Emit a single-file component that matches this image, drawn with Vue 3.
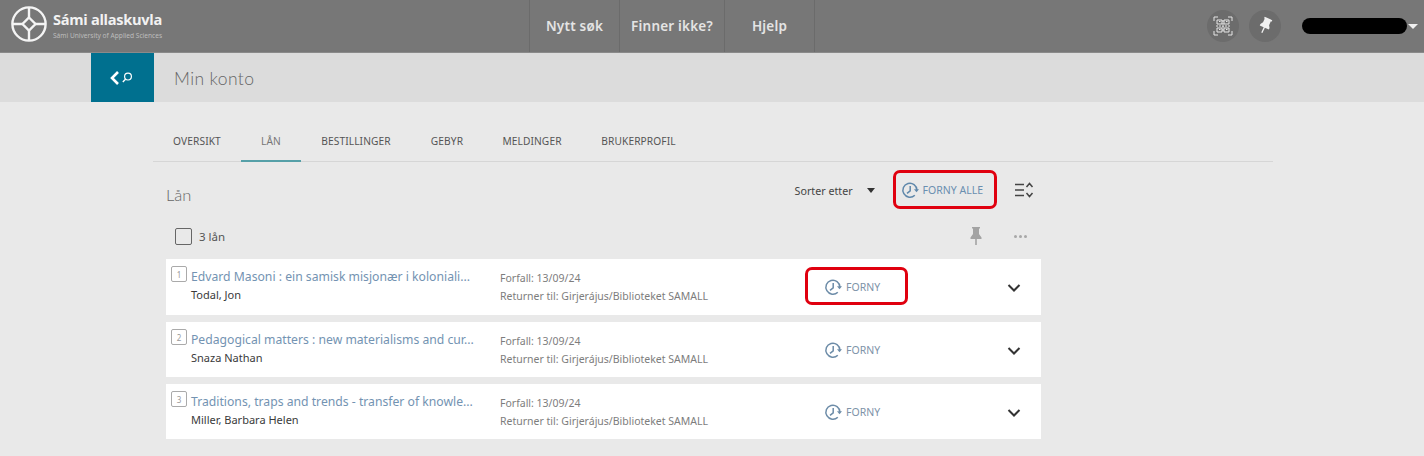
<script setup>
const tabs = [
  { label: 'OVERSIKT', w: 88 },
  { label: 'LÅN', w: 60, active: true },
  { label: 'BESTILLINGER', w: 110 },
  { label: 'GEBYR', w: 72 },
  { label: 'MELDINGER', w: 98 },
  { label: 'BRUKERPROFIL', w: 115 }
]
const loans = [
  { n: 1, title: 'Edvard Masoni : ein samisk misjonær i koloniali...', author: 'Todal, Jon', h: 56, marked: true },
  { n: 2, title: 'Pedagogical matters : new materialisms and cur...', author: 'Snaza Nathan', h: 55 },
  { n: 3, title: 'Traditions, traps and trends - transfer of knowle...', author: 'Miller, Barbara Helen', h: 55 }
]
</script>

<template>
  <div class="page">
    <header class="top">
      <div class="logo">
        <svg width="38" height="38" viewBox="0 0 38 38" fill="none" stroke="#f4f4f4" stroke-width="2.4">
          <circle cx="19" cy="19" r="16.6" />
          <path d="M19 12.5 25.5 19 19 25.5 12.500 19Z" />
          <path d="M19 3v9.500M19 25.500V35M3 19h9.500M25.500 19H35" />
        </svg>
        <div class="logo-text">
          <div class="logo-name">Sámi allaskuvla</div>
          <div class="logo-sub">Sámi University of Applied Sciences</div>
        </div>
      </div>
      <nav class="nav">
        <a class="w1">Nytt søk</a>
        <a class="w2">Finner ikke?</a>
        <a class="w3">Hjelp</a>
      </nav>
      <div class="tools">
        <span class="round">
          <svg width="20" height="20" viewBox="0 0 20 20" fill="none" stroke="#e6e6e6" stroke-width="1">
            <path d="M1 5V1h4M15 1h4v4M19 15v4h-4M5 19H1v-4" />
            <path d="M4 4h5v4H4zM11 4h5v4h-5zM4 12h5v4H4zM11 12h5v4h-5z" />
            <path d="M3 10h14M6 5.500h1.500M13 5.500h1.500M6 13.500h1.500M13 13.500h1.500M10 4v12" stroke-width="1" stroke-dasharray="2 1" />
          </svg>
        </span>
        <span class="round pin">
          <svg width="20" height="20" viewBox="0 0 24 24" fill="#f0f0f0">
            <path d="M16 9V4h1V2H7v2h1v5l-2 3v2h5.200v7h1.600v-7H18v-2z" transform="rotate(25 12 12)" />
          </svg>
        </span>
        <span class="redact"></span>
        <span class="caret-white"></span>
      </div>
    </header>

    <div class="sub">
      <div class="back">
        <svg width="30" height="20" viewBox="0 0 30 20" fill="none" stroke="#fff">
          <path d="M10 4 4 10l6 6" stroke-width="2.600" />
          <circle cx="20" cy="8.600" r="3.400" stroke-width="1.200" />
          <path d="M17.500 11.200 14.800 14" stroke-width="1.400" />
        </svg>
      </div>
      <h1>Min konto</h1>
    </div>

    <main class="main">
      <div class="tabs">
        <a v-for="t in tabs" :key="t.label" class="tab" :class="{ active: t.active }" :style="{ width: t.w + 'px' }">{{ t.label }}</a>
      </div>

      <section class="content">
        <div class="head">
          <h2>Lån</h2>
          <div class="head-actions">
            <span class="sort">Sorter etter</span>
            <span class="caret-dark"></span>
            <a class="renew all marked">
              <svg class="clock" width="18" height="18" viewBox="0 0 18 18" fill="none" stroke="#5f88ab" stroke-width="1.500">
                <path d="M13.800 14.200A7 7 0 1 1 15.900 9" />
                <path d="M9.200 5v4.800L6 12.400" />
                <path d="M13 8.200h5l-2.500 3z" fill="#5f88ab" stroke="none" />
              </svg>
              FORNY ALLE
            </a>
            <svg class="list-sort" width="20" height="18" viewBox="0 0 20 18" fill="none" stroke="#444" stroke-width="1.500">
              <path d="M1 3.500h9M1 9h9M1 14.500h9M12.500 6l3-3.500 3 3.500M12.500 12l3 3.500 3-3.500" />
            </svg>
          </div>
        </div>

        <div class="select-row">
          <span class="check"></span>
          <span class="count">3 lån</span>
          <span class="spacer"></span>
          <svg width="14" height="20" viewBox="0 0 14 20" fill="#a3a3a3">
            <path d="M3 1h8v1.500h-1V8l2.500 3.500V13H7.800v6H6.200v-6H1.500v-1.500L4 8V2.500H3z" />
          </svg>
          <span class="dots"><i></i><i></i><i></i></span>
        </div>

        <div class="rows">
          <article v-for="l in loans" :key="l.n" class="row" :style="{ height: l.h + 'px' }">
            <span class="num">{{ l.n }}</span>
            <div class="book">
              <a class="title">{{ l.title }}</a>
              <div class="author">{{ l.author }}</div>
            </div>
            <div class="meta">
              <div>Forfall: 13/09/24</div>
              <div>Returner til: Girjerájus/Biblioteket SAMALL</div>
            </div>
            <a class="renew single" :class="{ marked: l.marked }">
              <svg class="clock" width="18" height="18" viewBox="0 0 18 18" fill="none" stroke="#6d8ca8" stroke-width="1.500">
                <path d="M13.800 14.200A7 7 0 1 1 15.900 9" />
                <path d="M9.200 5v4.800L6 12.400" />
                <path d="M13 8.200h5l-2.500 3z" fill="#6d8ca8" stroke="none" />
              </svg>
              FORNY
            </a>
            <svg class="chev" width="14" height="10" viewBox="0 0 14 10" fill="none" stroke="#333" stroke-width="2">
              <path d="m1.500 2 5.500 5.500L12.500 2" />
            </svg>
          </article>
        </div>
      </section>
    </main>
  </div>
</template>

<style>
html, body { margin: 0; background: #e9e9e9; }
</style>

<style scoped>
.page {
  width: 1424px;
  height: 456px;
  overflow: hidden;
  background: #e9e9e9;
  font-family: "Noto Sans", "Open Sans", sans-serif;
  color: #444;
}
.top {
  height: 52px;
  background: #777;
  display: flex;
  align-items: center;
  border-bottom: 1px solid #8a8a8a;
  position: relative;
}
.logo { display: flex; align-items: center; gap: 5px; padding-left: 10px; width: 519px; box-sizing: border-box; margin-top: -5px; }
.logo-name { color: #f2f2f2; font-size: 14.600px; font-weight: 700; line-height: 20px; letter-spacing: -0.3px; font-family: "Open Sans", sans-serif; margin-top: 1px; }
.logo-sub { color: #bdbdbd; font-size: 6.600px; line-height: 9px; margin-top: 2px; }
.nav { display: flex; height: 52px; border-left: 1px solid #6b6b6b; margin-left: 10px; }
.nav a {
  display: flex; align-items: center; justify-content: center;
  border-right: 1px solid #6b6b6b;
  color: #e4e4e4; font-size: 13.500px; font-weight: 600; letter-spacing: .2px;
  box-sizing: border-box;
}
.nav .w1 { width: 90px; }
.nav .w2 { width: 105px; }
.nav .w3 { width: 90px; }
.tools { margin-left: auto; display: flex; align-items: center; height: 52px; padding-right: 6px; }
.round { width: 32px; height: 32px; border-radius: 50%; background: #6c6c6c; display: flex; align-items: center; justify-content: center; }
.pin { margin-left: 10px; }
.redact { width: 105px; height: 16px; background: #000; border-radius: 8px; margin-left: 21px; }
.caret-white { width: 0; height: 0; border: 5px solid transparent; border-top: 5px solid #f0f0f0; border-bottom: 0; margin-left: 1px; }

.sub { height: 49px; background: #dcdcdc; display: flex; align-items: center; padding-left: 91px; }
.back { width: 63px; height: 49px; background: #00708f; display: flex; align-items: center; justify-content: center; }
h1 { font-size: 17.500px; font-weight: 300; color: #666; margin: 2px 0 0 20px; font-family: "Lato", sans-serif; letter-spacing: .4px; }

.main { padding: 20px 151px 0 153px; }
.tabs { display: flex; height: 39px; border-bottom: 1px solid #d6d6d6; }
.tab {
  display: flex; align-items: center; justify-content: center;
  font-size: 10.200px; color: #555; box-sizing: border-box; height: 38px; letter-spacing: .1px;
}
.tab.active { color: #777; border-bottom: 2px solid #56a0a8; height: 40px; }

.content { width: 875px; margin-left: 13px; }
.head { display: flex; align-items: center; justify-content: space-between; height: 56px; margin-top: 1px; }
h2 { font-size: 16.500px; font-weight: 300; color: #666; margin: 8px 0 0; font-family: "Lato", sans-serif; }
.head-actions { display: flex; align-items: center; margin-top: -2px; margin-right: 7px; }
.sort { font-size: 10.700px; color: #444; margin-top: 2px; }
.caret-dark { width: 0; height: 0; border: 4.500px solid transparent; border-top: 5px solid #333; border-bottom: 0; margin: 0 26px 0 14px; }
.renew { display: flex; align-items: center; font-size: 10.500px; gap: 4px; position: relative; }
.renew.all { color: #6a8fb0; }
.renew.single { color: #7e93a8; position: absolute; left: 658px; top: 19px; }
.marked::after {
  content: "";
  position: absolute;
  border: 3px solid #e0000f;
  border-radius: 7px;
  box-sizing: border-box;
}
.renew.all.marked::after { left: -8px; top: -11px; width: 104px; height: 39px; }
.renew.single.marked::after { left: -19px; top: -11px; width: 103px; height: 38px; }
.list-sort { margin-left: 31px; }

.select-row { display: flex; align-items: center; height: 30px; padding: 0 14px 0 9px; margin-top: 2px; }
.check { width: 15px; height: 15px; border: 1px solid #666; border-radius: 2px; }
.count { font-size: 11.500px; margin-left: 7px; color: #555; }
.spacer { flex: 1; }
.dots { display: flex; gap: 2px; margin-left: 31px; }
.dots i { width: 3px; height: 3px; background: #a8a8a8; border-radius: 50%; }

.rows { display: flex; flex-direction: column; gap: 7px; margin-top: 8px; }
.row { background: #fff; position: relative; display: flex; align-items: flex-start; }
.num {
  position: absolute; left: 5px; top: 7px; width: 14px; height: 14px;
  border: 1px solid #aaa; border-radius: 2px;
  font-size: 8px; color: #999; display: flex; align-items: center; justify-content: center;
}
.book { position: absolute; left: 25px; top: 8px; }
.title { font-size: 12.200px; color: #7393b2; line-height: 20px; display: block; white-space: nowrap; }
.author { font-size: 11px; color: #3a3a3a; line-height: 18px; margin-top: -1px; }
.meta { position: absolute; left: 334px; top: 10px; font-size: 10.500px; color: #7d7d7d; line-height: 18px; white-space: nowrap; }
.chev { position: absolute; left: 841px; top: 24px; }
</style>
